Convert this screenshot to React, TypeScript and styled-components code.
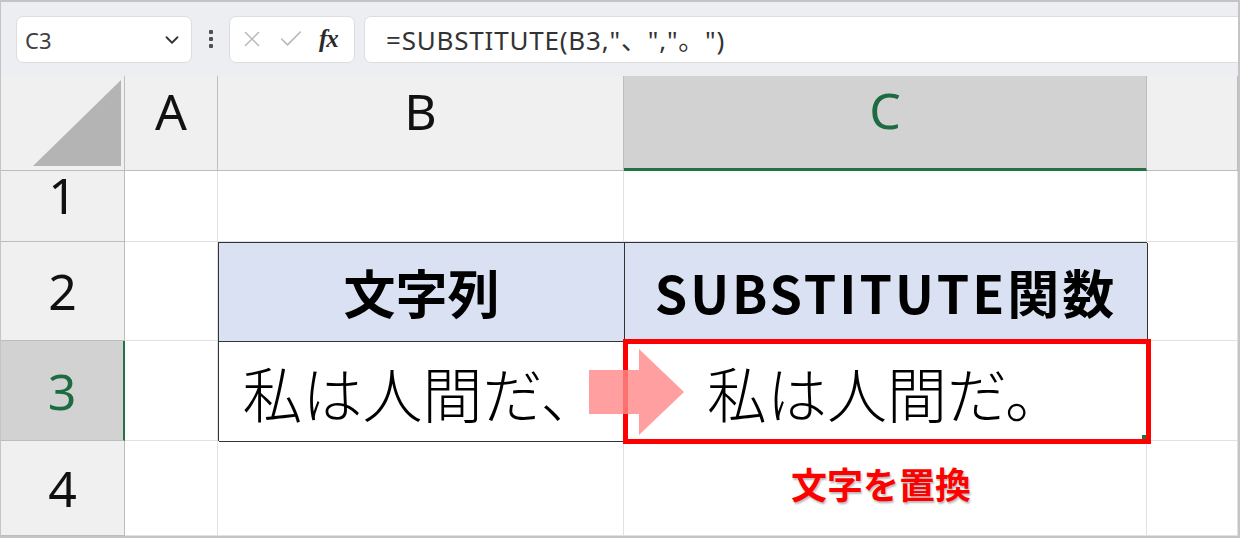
import styled, { createGlobalStyle } from "styled-components";
import { ChevronDown, X, Check } from "lucide-react";

const GlobalStyle = createGlobalStyle`
  html, body {
    margin: 0;
    padding: 0;
    background: #ffffff;
    overflow: hidden;
  }
  * {
    box-sizing: border-box;
  }
`;

const UI = `"Noto Sans", "Noto Sans CJK JP", sans-serif`;
const JP = `"Noto Sans CJK JP", sans-serif`;

const Frame = styled.div`
  width: 1240px;
  height: 538px;
  border-top: 2px solid #c4c4c4;
  border-left: 1px solid #c4c4c4;
  border-right: 2px solid #c4c4c4;
  border-bottom: 2px solid #c4c4c4;
  overflow: hidden;
  display: flex;
  flex-direction: column;
  font-family: ${UI};
`;

const Toolbar = styled.div`
  height: 74px;
  flex-shrink: 0;
  background: #eceef1;
  display: flex;
  align-items: center;
  padding: 0 0 0 15px;
`;

const NameBox = styled.div`
  width: 176px;
  height: 47px;
  background: #ffffff;
  border: 1px solid #dcdde0;
  border-radius: 7px;
  display: flex;
  align-items: center;
  justify-content: space-between;
  padding: 2px 8px 0 8px;
  font-size: 22px;
  color: #404040;
`;

const Dots = styled.div`
  width: 37px;
  display: flex;
  flex-direction: column;
  align-items: center;
  gap: 3px;

  span {
    width: 4px;
    height: 4px;
    border-radius: 1px;
    background: #505050;
  }
`;

const FxBox = styled.div`
  width: 126px;
  height: 47px;
  background: #ffffff;
  border: 1px solid #dcdde0;
  border-radius: 7px;
  display: flex;
  align-items: center;
  padding: 0 8px 0 9px;
  gap: 12px;
  color: #b9b9b9;
`;

const Fx = styled.span`
  font-family: "Liberation Serif", serif;
  font-style: italic;
  font-weight: 700;
  font-size: 25px;
  color: #2a2a2a;
  margin-left: 2px;
  letter-spacing: -1px;
`;

const FormulaInput = styled.div`
  flex: 1;
  height: 47px;
  margin-left: 9px;
  margin-right: -12px;
  background: #ffffff;
  border: 1px solid #dcdde0;
  border-radius: 7px;
  display: flex;
  align-items: center;
  padding: 0 0 0 21px;
  font-size: 26px;
  letter-spacing: 0.8px;
  color: #333333;
  white-space: pre;
`;

const Sheet = styled.div`
  display: grid;
  grid-template-columns: 124px 93px 406px 523px 1fr;
  grid-template-rows: 95px 71px 99px 100px 1fr;
  flex: 1;
`;

const Corner = styled.div`
  background: #f0f0f0;
  border-right: 1px solid #bdbdbd;
  border-bottom: 1px solid #bdbdbd;
  display: flex;
  padding: 5px 3px 4px 0;
  justify-content: flex-end;
  align-items: flex-end;
`;

const ColHead = styled.div<{ $selected?: boolean }>`
  background: ${(p) => (p.$selected ? "#d2d2d2" : "#f0f0f0")};
  border-right: 1px solid #bdbdbd;
  border-bottom: ${(p) => (p.$selected ? "3px solid #217346" : "1px solid #bdbdbd")};
  display: flex;
  justify-content: center;
  align-items: center;
  padding-bottom: 24px;
  font-size: 50px;
  color: ${(p) => (p.$selected ? "#1d6b40" : "#111111")};
  line-height: 1;
`;

const RowHead = styled.div<{ $selected?: boolean; $lift?: number }>`
  background: ${(p) => (p.$selected ? "#d2d2d2" : "#f0f0f0")};
  border-right: ${(p) => (p.$selected ? "2px solid #217346" : "1px solid #bdbdbd")};
  border-bottom: 1px solid #bdbdbd;
  display: flex;
  justify-content: center;
  align-items: center;
  padding-bottom: ${(p) => p.$lift ?? 0}px;
  font-size: 50px;
  color: ${(p) => (p.$selected ? "#1d6b40" : "#111111")};
  line-height: 1;
`;

const Cell = styled.div`
  background: #ffffff;
  border-right: 1px solid #e1e1e1;
  border-bottom: 1px solid #e1e1e1;
  display: flex;
  justify-content: center;
  align-items: center;
`;

const Note = styled.span`
  font-family: ${JP};
  font-weight: 700;
  font-size: 36px;
  color: #ff0000;
  text-shadow: 1px 2px 2px rgba(0, 0, 0, 0.28);
  margin-top: -10px;
  margin-left: -8px;
`;

const Table = styled.div`
  grid-column: 3 / 5;
  grid-row: 3 / 5;
  display: grid;
  grid-template-columns: 406px 523px;
  grid-template-rows: 99px 100px;
  border-left: 1px solid #333333;
  border-top: 1px solid #333333;
  position: relative;
`;

const TCell = styled.div<{ $head?: boolean; $spacing?: number }>`
  background: ${(p) => (p.$head ? "#d9e1f2" : "#ffffff")};
  border-right: 1px solid #333333;
  border-bottom: 1px solid #333333;
  display: flex;
  justify-content: center;
  align-items: center;
  font-family: ${JP};
  font-weight: ${(p) => (p.$head ? 700 : 300)};
  font-size: ${(p) => (p.$head ? "52px" : "60px")};
  letter-spacing: ${(p) => p.$spacing ?? 0}px;
  color: #000000;
  line-height: 1;
  white-space: nowrap;
  position: relative;
`;

const Arrow = styled.svg`
  position: absolute;
  left: 370px;
  top: 104px;
  width: 95px;
  height: 90px;
`;

const Highlight = styled.div`
  position: absolute;
  left: -2px;
  top: -3px;
  right: -4px;
  bottom: -3px;
  border: 5px solid #ff0000;
  pointer-events: none;

  &::after {
    content: "";
    position: absolute;
    right: 0;
    bottom: 0;
    width: 4px;
    height: 4px;
    background: #217346;
  }
`;

export default function App() {
  return (
    <>
      <GlobalStyle />
      <Frame>
        <Toolbar>
          <NameBox>
            <span>C3</span>
            <ChevronDown size={22} color="#333" strokeWidth={2} />
          </NameBox>
          <Dots>
            <span />
            <span />
            <span />
          </Dots>
          <FxBox>
            <X size={26} strokeWidth={1.4} />
            <Check size={28} strokeWidth={1.4} />
            <Fx>fx</Fx>
          </FxBox>
          <FormulaInput>=SUBSTITUTE(B3,"、","。")</FormulaInput>
        </Toolbar>

        <Sheet>
          <Corner>
            <svg width="88" height="86" viewBox="0 0 88 86">
              <polygon points="88,0 88,86 0,86" fill="#b4b4b4" />
            </svg>
          </Corner>
          <ColHead>A</ColHead>
          <ColHead>B</ColHead>
          <ColHead $selected>C</ColHead>
          <ColHead />

          <RowHead $lift={22}>1</RowHead>
          <Cell />
          <Cell />
          <Cell />
          <Cell />

          <RowHead>2</RowHead>
          <Cell />
          <Table>
            <TCell $head>文字列</TCell>
            <TCell $head $spacing={3}>
              SUBSTITUTE関数
            </TCell>
            <TCell>私は人間だ、</TCell>
            <TCell>
              私は人間だ。
              <Highlight />
            </TCell>
            <Arrow viewBox="0 0 95 90">
              <polygon
                points="0,23 50,23 50,2 95,45 50,88 50,67 0,67"
                fill="#ff8a8a"
                opacity="0.82"
              />
            </Arrow>
          </Table>
          <Cell />

          <RowHead $selected>3</RowHead>
          <Cell />
          <Cell />

          <RowHead>4</RowHead>
          <Cell />
          <Cell />
          <Cell>
            <Note>文字を置換</Note>
          </Cell>
          <Cell />
        </Sheet>
      </Frame>
    </>
  );
}
